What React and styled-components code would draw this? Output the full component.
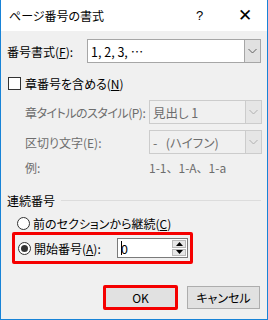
import React from "react";
import styled, { createGlobalStyle } from "styled-components";

const Global = createGlobalStyle`
  html, body { margin: 0; padding: 0; }
  body {
    width: 268px;
    height: 320px;
    overflow: hidden;
    font-family: "Noto Sans CJK JP", "Noto Sans", sans-serif;
    font-size: 12px;
    font-feature-settings: "palt";
    color: #000;
  }
  * { box-sizing: border-box; }
`;

const Window = styled.div`
  width: 268px;
  height: 320px;
  display: flex;
  flex-direction: column;
  border: 1px solid #1883d7;
  border-top: none;
  background: #f0f0f0;
`;

const TitleBar = styled.div`
  height: 31px;
  background: #fff;
  display: flex;
  align-items: center;
  padding-left: 8px;
`;

const Title = styled.div`
  flex: 1;
  font-size: 12px;
  color: #000;
`;

const CaptionButton = styled.div`
  width: 45px;
  height: 31px;
  display: flex;
  align-items: center;
  justify-content: center;
  font-size: ${(p) => (p.$big ? "17px" : "13px")};
  font-family: "Liberation Sans", sans-serif;
  color: #000;
`;

const Body = styled.div`
  flex: 1;
  display: flex;
  flex-direction: column;
  padding: 8px 6px 0 6px;
`;

const Row = styled.div`
  display: flex;
  align-items: center;
  height: ${(p) => p.$h || 24}px;
  margin-top: ${(p) => p.$mt || 0}px;
  padding-left: ${(p) => p.$indent || 0}px;
  color: ${(p) => (p.$disabled ? "#6d6d6d" : "#000")};
`;

const Label = styled.div`
  width: ${(p) => (p.$w ? `${p.$w}px` : "auto")};
  flex: none;
  white-space: nowrap;
  letter-spacing: ${(p) => (p.$tight ? "-0.5px" : "0")};
  font-feature-settings: ${(p) => (p.$plain ? "normal" : "\"palt\"")};
`;

const U = styled.span`
  text-decoration: underline;
  text-underline-offset: 1px;
`;

const Combo = styled.div`
  flex: 1;
  height: 24px;
  display: flex;
  border: 1px solid ${(p) => (p.$disabled ? "#cccccc" : "#a6a6a6")};
  background: ${(p) => (p.$disabled ? "#f0f0f0" : "#fff")};
  color: ${(p) => (p.$disabled ? "#6d6d6d" : "#000")};
  margin-right: ${(p) => (p.$disabled ? -1 : 0)}px;
`;

const ComboText = styled.div`
  flex: 1;
  display: flex;
  align-items: center;
  padding-left: 3px;
  font-size: 12.5px;
  white-space: nowrap;
`;

const ComboArrow = styled.div`
  width: 16px;
  display: flex;
  align-items: center;
  justify-content: center;
  background: ${(p) => (p.$disabled ? "#e6e6e6" : "#e1e1e1")};
  border-left: 1px solid ${(p) => (p.$disabled ? "#cccccc" : "#a6a6a6")};
`;

const Checkbox = styled.div`
  width: 13px;
  height: 13px;
  border: 1px solid #333;
  background: #fff;
  flex: none;
  margin: 0 4px 0 1px;
`;

const GroupHeader = styled.div`
  display: flex;
  align-items: center;
  height: 18px;
  margin-top: 15px;
  gap: 6px;
`;

const Rule = styled.div`
  flex: 1;
  height: 1px;
  background: #dcdcdc;
`;

const Radio = styled.div`
  width: 13px;
  height: 13px;
  border-radius: 50%;
  border: 1px solid #333;
  background: #fff;
  flex: none;
  display: flex;
  align-items: center;
  justify-content: center;
  margin-right: 3px;
  &::after {
    content: "";
    display: ${(p) => (p.$checked ? "block" : "none")};
    width: 7px;
    height: 7px;
    border-radius: 50%;
    background: #333;
  }
`;

const RadioRow = styled.div`
  display: flex;
  align-items: center;
  height: 18px;
  margin-top: 5px;
  padding-left: 10px;
`;

const Highlight = styled.div`
  display: flex;
  align-items: center;
  width: 181px;
  height: 32px;
  margin-left: 5px;
  padding-left: 3px;
  border: 3px solid #f50000;
  border-radius: 2px;
`;

const SpinBox = styled.div`
  width: 71px;
  height: 20px;
  display: flex;
  border: 1px solid #7a7a7a;
  background: #fff;
  padding: 1px;
`;

const SpinText = styled.div`
  flex: 1;
  display: flex;
  align-items: center;
  padding-left: 2px;
  font-size: 12.5px;
`;

const Caret = styled.span`
  display: inline-block;
  width: 1px;
  height: 14px;
  background: #000;
  margin-right: -1px;
`;

const SpinButtons = styled.div`
  width: 14px;
  display: flex;
  flex-direction: column;
  gap: 1px;
`;

const SpinBtn = styled.div`
  flex: 1;
  background: #e6e6e6;
  border: 1px solid #b9b9b9;
  display: flex;
  align-items: center;
  justify-content: center;
`;

const ButtonBar = styled.div`
  display: flex;
  justify-content: flex-end;
  align-items: center;
  gap: 9px;
  margin-top: 21px;
  padding-right: 1px;
`;

const Button = styled.div`
  width: ${(p) => (p.$focused ? 75 : 73)}px;
  height: ${(p) => (p.$focused ? 25 : 23)}px;
  display: flex;
  align-items: center;
  justify-content: center;
  background: #e1e1e1;
  border: ${(p) => (p.$focused ? "3px solid #f50000" : "1px solid #adadad")};
  border-radius: ${(p) => (p.$focused ? 2 : 0)}px;
  font-size: 12px;
`;

const Chevron = ({ color = "#606060" }) => (
  <svg width="9" height="6" viewBox="0 0 9 6">
    <polyline points="0.5,1 4.5,5 8.5,1" fill="none" stroke={color} strokeWidth="1" />
  </svg>
);

const Tri = ({ up }) => (
  <svg width="7" height="4" viewBox="0 0 7 4">
    <polygon points={up ? "0,4 7,4 3.5,0" : "0,0 7,0 3.5,4"} fill="#000" />
  </svg>
);

export default function App() {
  return (
    <>
      <Global />
      <Window>
        <TitleBar>
          <Title>ページ番号の書式</Title>
          <CaptionButton>?</CaptionButton>
          <CaptionButton $big>✕</CaptionButton>
        </TitleBar>
        <Body>
          <Row $h={24}>
            <Label $w={80}>番号書式(<U>F</U>):</Label>
            <Combo>
              <ComboText>1, 2, 3, …</ComboText>
              <ComboArrow>
                <Chevron />
              </ComboArrow>
            </Combo>
          </Row>
          <Row $h={20} $mt={10}>
            <Checkbox />
            <Label>章番号を含める(<U>N</U>)</Label>
          </Row>
          <Row $h={24} $mt={7} $indent={18} $disabled>
            <Label $w={124} $tight>章タイトルのスタイル(P):</Label>
            <Combo $disabled>
              <ComboText>見出し 1</ComboText>
              <ComboArrow $disabled>
                <Chevron color="#b0b0b0" />
              </ComboArrow>
            </Combo>
          </Row>
          <Row $h={24} $mt={6} $indent={18} $disabled>
            <Label $w={124}>区切り文字(E):</Label>
            <Combo $disabled>
              <ComboText>-&nbsp;&nbsp;&nbsp;(ハイフン)</ComboText>
              <ComboArrow $disabled>
                <Chevron color="#b0b0b0" />
              </ComboArrow>
            </Combo>
          </Row>
          <Row $h={18} $mt={4} $indent={18} $disabled>
            <Label $w={124}>例:</Label>
            <Label $plain>1-1、1-A、1-a</Label>
          </Row>
          <GroupHeader>
            <span>連続番号</span>
            <Rule />
          </GroupHeader>
          <RadioRow>
            <Radio />
            <span>前のセクションから継続(<U>C</U>)</span>
          </RadioRow>
          <Highlight>
            <Radio $checked />
            <Label $w={83}>開始番号(<U>A</U>):</Label>
            <SpinBox>
              <SpinText>
                <Caret />0
              </SpinText>
              <SpinButtons>
                <SpinBtn>
                  <Tri up />
                </SpinBtn>
                <SpinBtn>
                  <Tri />
                </SpinBtn>
              </SpinButtons>
            </SpinBox>
          </Highlight>
          <ButtonBar>
            <Button $focused>OK</Button>
            <Button>キャンセル</Button>
          </ButtonBar>
        </Body>
      </Window>
    </>
  );
}
